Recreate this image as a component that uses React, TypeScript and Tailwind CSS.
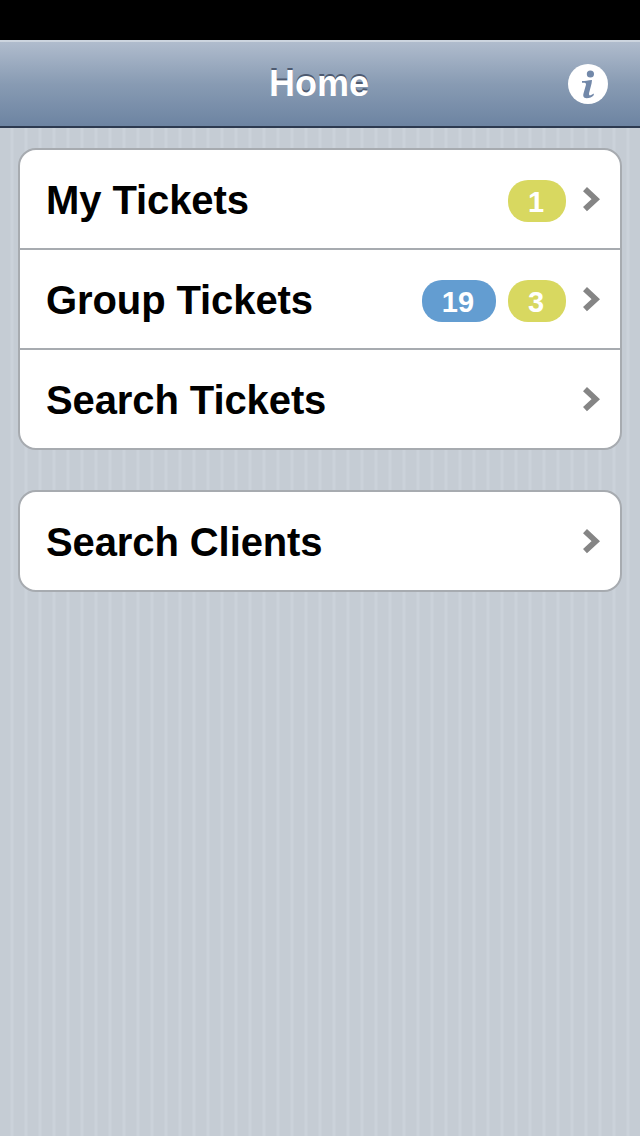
type Badge = {
    count: number;
    color: "blue" | "yellow";
};

type Item = {
    label: string;
    badges?: Badge[];
};

const groups: Item[][] = [
    [
        { label: "My Tickets", badges: [{ count: 1, color: "yellow" }] },
        {
            label: "Group Tickets",
            badges: [
                { count: 19, color: "blue" },
                { count: 3, color: "yellow" },
            ],
        },
        { label: "Search Tickets" },
    ],
    [{ label: "Search Clients" }],
];

const badgeColors = {
    blue: "bg-[#639dd1] w-[74px]",
    yellow: "bg-[#d8d860] w-[58px]",
};

function Chevron() {
    return (
        <svg width="18" height="28" viewBox="0 0 18 28" className="ml-4 shrink-0">
            <path d="M3 4.2 L13.8 14.2 L3 24.2" fill="none" stroke="#858585" strokeWidth="5.8" />
        </svg>
    );
}

function InfoIcon() {
    return (
        <svg width="40" height="40" viewBox="0 0 40 40">
            <circle cx="20" cy="20" r="20" fill="#fff" />
            <circle cx="22.4" cy="10" r="3.6" fill="#7288a9" />
            <path
                d="M14 17 C17 16.9 20 16.4 24 15.9 C23.9 20 21.9 25 21.1 29 C20.8 31 21.4 31.7 22.6 31.3 C23.8 31 24.6 30.4 25.6 29.6 L25.9 31 C24 33.2 21.5 34.3 18.6 34.3 C15.6 34.3 14.8 32.3 15.5 29.6 L17.9 21 C18.4 18.8 17.4 18.6 14 18.7 Z"
                fill="#7288a9"
            />
        </svg>
    );
}

export default function App() {
    return (
        <div className="flex h-[1136px] w-[640px] flex-col bg-[repeating-linear-gradient(90deg,#c5ccd4_0px,#c5ccd4_10px,#cbd2da_11px,#cbd2da_13px,#c5ccd4_14px)] font-['Liberation_Sans',Arial,sans-serif] font-bold">
            <div className="h-10 bg-black" />
            <header className="grid h-22 grid-cols-[72px_1fr_72px] items-center border-t-2 border-b-2 border-t-[#cdd5df] border-b-[#2d3a50] bg-linear-to-b from-[#b0bccd] via-[#889bb3] to-[#6d84a2]">
                <div />
                <h1 className="pr-0.5 text-center text-[36px] leading-none text-white [text-shadow:0_-2px_0_#4d5a70]">Home</h1>
                <button>
                    <InfoIcon />
                </button>
            </header>

            <main className="flex flex-col gap-10 px-[18px] pt-5">
                {groups.map((items, i) => (
                    <ul key={i} className="divide-y-2 divide-[#a7abb0] overflow-hidden rounded-[18px] border-2 border-[#a7abb0] bg-white">
                        {items.map((item) => (
                            <li key={item.label} className="flex h-[100px] items-center pr-5 pl-[26px] last:h-[98px]">
                                <span className="grow pt-0.5 text-[40px] leading-none tracking-[-0.1px] text-black">{item.label}</span>
                                <div className="mt-1 flex gap-3">
                                    {item.badges?.map((badge) => (
                                        <span
                                            key={badge.color}
                                            className={`flex h-[42px] items-center justify-center rounded-[20px] pt-0.5 pr-0.5 text-[29px] leading-none text-white ${badgeColors[badge.color]}`}
                                        >
                                            {badge.count}
                                        </span>
                                    ))}
                                </div>
                                <Chevron />
                            </li>
                        ))}
                    </ul>
                ))}
            </main>
        </div>
    );
}
